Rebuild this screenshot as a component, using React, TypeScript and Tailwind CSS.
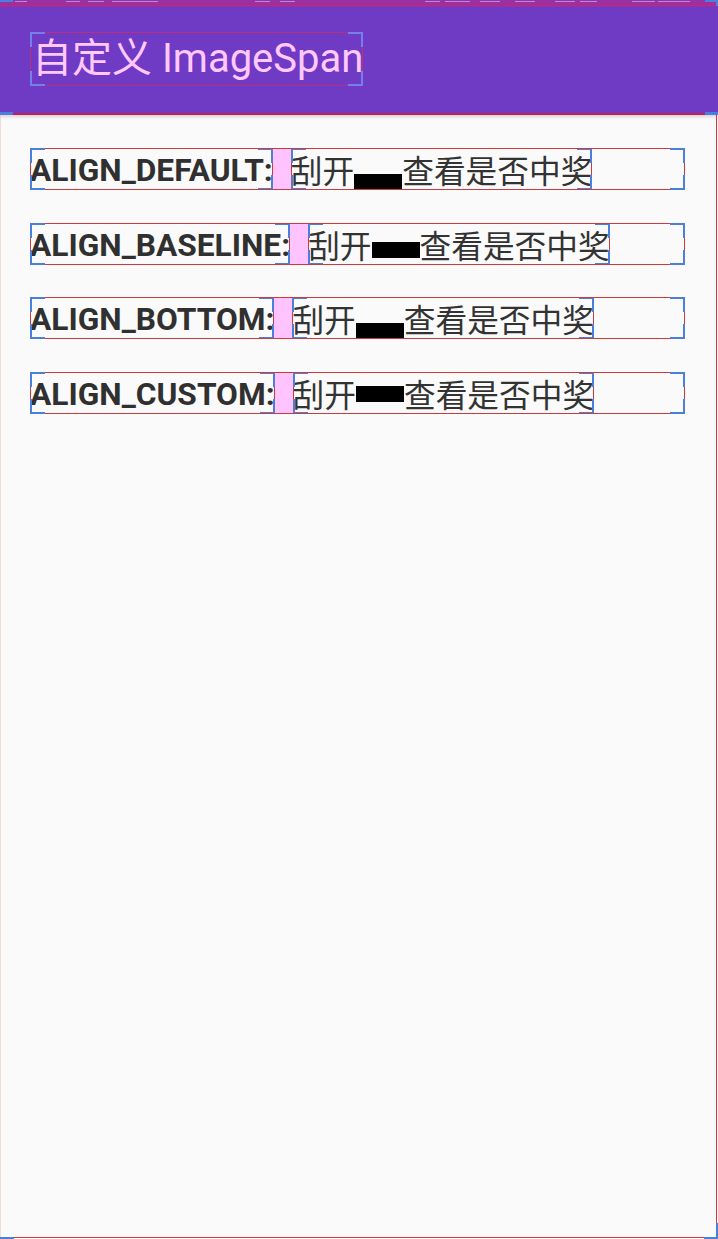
import React from 'react'

// layout-bounds overlay: red outline + blue corner marks (Android "show layout bounds")
function Bounds({ dark = false }: { dark?: boolean }) {
  const line = dark ? 'border-[#b8307a]' : 'border-[#cc3a3a]'
  const mark = dark ? 'border-[#7480ea]' : 'border-[#4a7fdc]'
  return (
    <span className="pointer-events-none absolute inset-0">
      <span className={`absolute inset-0 border ${line}`} />
      <span className={`absolute left-0 top-0 h-[15px] w-[15px] border-l-2 border-t-2 ${mark}`} />
      <span className={`absolute right-0 top-0 h-[15px] w-[15px] border-r-2 border-t-2 ${mark}`} />
      <span className={`absolute bottom-0 left-0 h-[15px] w-[15px] border-b-2 border-l-2 ${mark}`} />
      <span className={`absolute bottom-0 right-0 h-[15px] w-[15px] border-b-2 border-r-2 ${mark}`} />
    </span>
  )
}

const rows = [
  { label: 'ALIGN_DEFAULT:', align: 'align-bottom' },
  { label: 'ALIGN_BASELINE:', align: 'align-baseline' },
  { label: 'ALIGN_BOTTOM:', align: 'align-bottom' },
  { label: 'ALIGN_CUSTOM:', align: 'align-[5px]' },
]

// faint bounds of the status bar icons, only their bottom edges are on screen
const statusMarks = [
  [15, 12], [66, 14], [88, 16], [112, 46], [255, 15], [280, 15], [425, 15], [445, 25],
  [480, 20], [515, 20], [555, 20], [580, 17], [632, 23], [658, 32],
]

export default function App() {
  return (
    <div
      className="relative flex h-[1239px] w-[718px] flex-col overflow-hidden bg-[#fafafa]"
      style={{ fontFamily: 'Roboto, "Noto Sans CJK SC", sans-serif' }}
    >
      {/* status bar remnant */}
      <div className="relative h-[7px] shrink-0 bg-[#9a30a3]">
        {statusMarks.map(([left, width], i) => (
          <span
            key={i}
            className="absolute top-0 h-[2px] border-b border-[#b58ad8]"
            style={{ left, width }}
          />
        ))}
        <span className="absolute bottom-[1px] left-0 right-0 h-px bg-[#c02a70]" />
        <span className="absolute left-0 top-0 h-[2px] w-[13px] bg-[#4a7fdc]" />
        <span className="absolute right-0 top-0 h-[2px] w-[13px] bg-[#4a7fdc]" />
        <span className="absolute right-0 top-0 h-[6px] w-[2px] bg-[#4a7fdc]" />
      </div>

      {/* toolbar */}
      <div className="relative z-10 flex h-[108px] shrink-0 items-start bg-[#6f3bc4] pl-[30px] pt-[25px] shadow-[0_2px_3px_rgba(120,20,60,0.18)]">
        <div className="relative flex h-[54px] items-center pl-[2px] text-[40px] leading-[54px] text-[#ffc8ff] whitespace-nowrap">
          自定义 ImageSpan
          <Bounds dark />
        </div>
        <span className="pointer-events-none absolute inset-x-0 bottom-0 h-[2px] border-b-2 border-[#c0205a]" />
        <span className="pointer-events-none absolute bottom-0 left-0 h-[3px] w-[13px] bg-[#4a7fdc]" />
        <span className="pointer-events-none absolute bottom-0 right-0 h-[3px] w-[13px] bg-[#4a7fdc]" />
      </div>

      {/* content */}
      <div className="relative flex flex-1 flex-col gap-[32.7px] pl-[30px] pt-[33px]">
        {rows.map(r => (
          <div key={r.label} className="relative flex h-[42px] w-[655px]">
            <div className="relative h-full whitespace-nowrap pt-[4px] text-[31.7px] font-bold leading-[38px] text-[#303030]">
              {r.label}
              <Bounds />
            </div>
            <div className="h-full w-[18px] bg-[#ffc4ff]" />
            <div
              className="relative h-full whitespace-nowrap text-[31.7px] leading-[42px] text-[#333333]"
              style={{ fontFamily: '"Noto Sans CJK SC", sans-serif' }}
            >
              刮开
              <span className={`inline-block h-[16px] w-[48px] bg-black ${r.align}`} />
              查看是否中奖
              <Bounds />
            </div>
            <Bounds />
          </div>
        ))}

        {/* content frame bounds */}
        <span className="pointer-events-none absolute inset-0">
          <span className="absolute inset-y-0 left-0 w-px bg-[#f6dada]" />
          <span className="absolute inset-y-0 right-[1px] w-px bg-[#cc3a3a]" />
          <span className="absolute inset-x-0 bottom-[1px] h-px bg-[#cc3a3a]" />
          <span className="absolute bottom-0 left-0 h-[2px] w-[14px] bg-[#4a7fdc]" />
          <span className="absolute bottom-0 right-0 h-[2px] w-[14px] bg-[#4a7fdc]" />
          <span className="absolute bottom-0 right-0 h-[16px] w-[2px] bg-[#4a7fdc]" />
        </span>
      </div>
    </div>
  )
}
